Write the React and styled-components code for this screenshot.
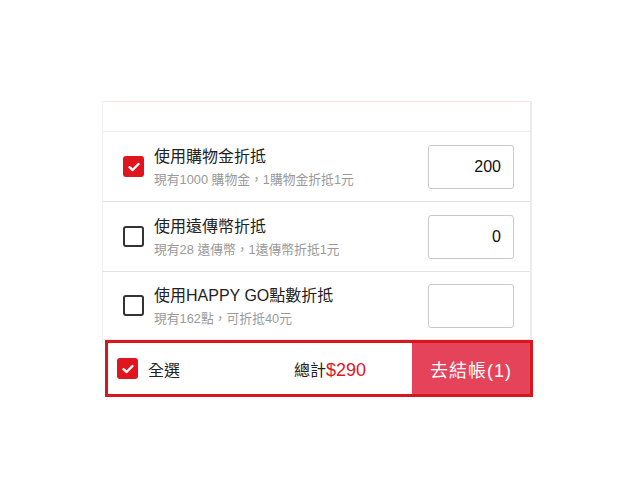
import React from "react"
import styled, { createGlobalStyle } from "styled-components"

const GlobalStyle = createGlobalStyle`
  body {
    margin: 0;
    background: #fff;
    font-family: "Liberation Sans", "Noto Sans CJK TC", sans-serif;
    color: #222;
  }
`

const Page = styled.div`
  padding: 101px 0 0 102px;
`

const Card = styled.section`
  width: 430px;
  box-sizing: border-box;
  border-left: 1px solid #f1f1f1;
  border-right: 2px solid #ebebeb;
`

const TopStrip = styled.div`
  height: 31px;
  box-sizing: border-box;
  border-top: 1px solid #fbe4df;
  border-bottom: 1px solid #ececec;
`

const Row = styled.div`
  height: ${(p) => (p.$last ? 68 : 70)}px;
  box-sizing: border-box;
  display: flex;
  align-items: center;
  padding: 0 16px 0 20px;
  border-bottom: 1px solid ${(p) => (p.$last ? "#fbe4df" : "#e2e2e2")};
`

const Box = styled.span`
  flex: none;
  width: 21px;
  height: 21px;
  box-sizing: border-box;
  border-radius: 3px;
  display: flex;
  align-items: center;
  justify-content: center;
  background: ${(p) => (p.$on ? "#e0161f" : "#fff")};
  border: ${(p) => (p.$on ? "none" : "2px solid #333")};
`

const Info = styled.div`
  flex: 1;
  display: flex;
  flex-direction: column;
  margin-left: 10px;
  margin-top: 2px;
`

const Title = styled.div`
  font-size: 16px;
  line-height: 20px;
  color: #222;
`

const Note = styled.div`
  font-size: 12.8px;
  line-height: 16px;
  margin-top: 5px;
  color: #9a9a9a;
`

const Amount = styled.div`
  width: 86px;
  height: 44px;
  box-sizing: border-box;
  border: 1px solid #c9c9c9;
  border-radius: 3px;
  display: flex;
  align-items: center;
  justify-content: flex-end;
  padding-right: 12px;
  font-size: 16px;
  color: #111;
`

const Footer = styled.footer`
  width: 428px;
  height: 57px;
  margin-left: 3px;
  box-sizing: border-box;
  border: 3px solid #d7161e;
  display: flex;
`

const FooterMain = styled.div`
  flex: 1;
  display: flex;
  align-items: center;
  padding: 0 46px 0 9px;
`

const SelectAll = styled.span`
  font-size: 16px;
  margin-left: 10px;
  flex: 1;
`

const Total = styled.span`
  font-size: 16px;
  color: #222;

  b {
    font-weight: normal;
    font-size: 18px;
    color: #e0161f;
  }
`

const CheckoutButton = styled.button`
  width: 118px;
  border: none;
  background: #e5435a;
  color: #fff;
  font-family: inherit;
  font-size: 18px;
  letter-spacing: 1px;
  padding: 0;
`

const Check = ({ on }) => (
  <Box $on={on}>
    {on && (
      <svg width="12" height="10" viewBox="0 0 12 10">
        <path d="M1.5 5.2 L4.6 8 L10.5 2" fill="none" stroke="#fff" strokeWidth="2.4" strokeLinecap="round" strokeLinejoin="round" />
      </svg>
    )}
  </Box>
)

const discounts = [
  { on: true, title: "使用購物金折抵", note: "現有1000 購物金，1購物金折抵1元", value: "200" },
  { on: false, title: "使用遠傳幣折抵", note: "現有28 遠傳幣，1遠傳幣折抵1元", value: "0" },
  { on: false, title: "使用HAPPY GO點數折抵", note: "現有162點，可折抵40元", value: "" },
]

const App = () => {
  return (
    <Page>
      <GlobalStyle />
      <Card>
        <TopStrip />
        {discounts.map((d, i) => (
          <Row key={d.title} $last={i === discounts.length - 1}>
            <Check on={d.on} />
            <Info>
              <Title>{d.title}</Title>
              <Note>{d.note}</Note>
            </Info>
            <Amount>{d.value}</Amount>
          </Row>
        ))}
      </Card>
      <Footer>
        <FooterMain>
          <Check on />
          <SelectAll>全選</SelectAll>
          <Total>
            總計<b>$290</b>
          </Total>
        </FooterMain>
        <CheckoutButton>去結帳(1)</CheckoutButton>
      </Footer>
    </Page>
  )
}

export default App
